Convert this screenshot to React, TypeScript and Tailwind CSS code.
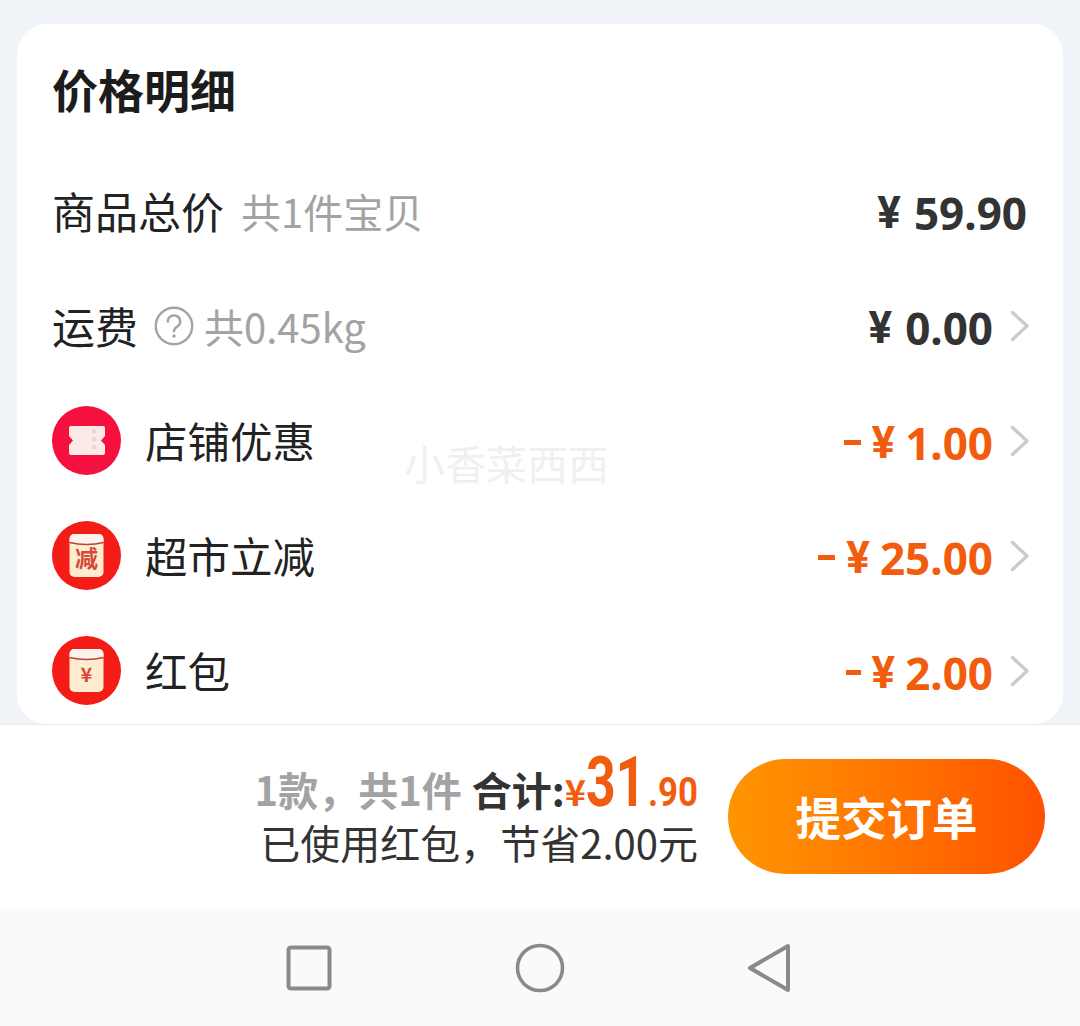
import React from "react";

const CJK = "font-['Noto_Sans_CJK_SC','Noto_Sans',sans-serif]";

function Chevron() {
  return (
    <svg width="20" height="32" viewBox="0 0 20 32" className="shrink-0" fill="none">
      <path d="M2.5 2.5 L17 16 L2.5 29.5" stroke="#cbcbcb" strokeWidth="3.4" strokeLinecap="round" strokeLinejoin="round" />
    </svg>
  );
}

function Coupon() {
  return (
    <svg width="70" height="70" viewBox="0 0 70 70" className="shrink-0">
      <circle cx="34.5" cy="34.5" r="34.5" fill="#f5103f" />
      <path d="M19 20 H51 a2 2 0 0 1 2 2 V30 L49 34.5 L53 39 V47 a2 2 0 0 1 -2 2 H19 a2 2 0 0 1 -2 -2 V39 L21 34.5 L17 30 V22 a2 2 0 0 1 2 -2 Z" fill="#fbe9e6" />
      <path d="M42 23 V46" stroke="#e8cfca" strokeWidth="3" strokeDasharray="4 4" />
    </svg>
  );
}

function Envelope({ glyph, size, glyphY }: { glyph: string; size: number; glyphY: number }) {
  return (
    <svg width="70" height="70" viewBox="0 0 70 70" className="shrink-0">
      <circle cx="34.5" cy="34.5" r="34.5" fill="#f41c17" />
      <rect x="17.5" y="13" width="34" height="43" rx="5" fill="#fdeccf" />
      <path d="M17.5 18 a5 5 0 0 1 5 -5 H46.5 a5 5 0 0 1 5 5 V21.5 Q34.5 25.5 17.5 21.5 Z" fill="#fdf3ee" />
      <path d="M17.5 21.5 Q34.5 25.5 51.5 21.5" fill="none" stroke="#b8433a" strokeWidth="1.6" />
      <text x="34.5" y={glyphY} textAnchor="middle" fontSize={size} fontWeight="700" fontFamily="'Noto Sans CJK SC',sans-serif" fill="#d64a3a">
        {glyph}
      </text>
    </svg>
  );
}

function Amount({ minus, value, accent }: { minus?: string; value: string; accent?: boolean }) {
  return (
    <span className={`flex items-center pt-[4px] font-bold text-[44px] leading-none font-['Noto_Sans','Noto_Sans_CJK_SC',sans-serif] ${accent ? "text-[#f25c0f]" : "text-[#333333]"}`}>
      {minus && <span className={`${minus} h-[5px] bg-[#f25c0f] mr-[11px]`} />}
      <span className={`${accent ? "mr-[10px]" : "mr-[13px]"} font-['Roboto',sans-serif]`}>¥</span>
      <span>{value}</span>
    </span>
  );
}

function DiscountRow({ icon, label, minus, value }: { icon: React.ReactNode; label: string; minus: string; value: string }) {
  return (
    <div className="h-[115px] flex items-center pr-[33px]">
      <span className="ml-0 mr-[23px] flex">{icon}</span>
      <span className="text-[42.5px] leading-none text-[#222222]">{label}</span>
      <span className="ml-auto flex items-center gap-[17px]">
        <Amount minus={minus} value={value} accent />
        <Chevron />
      </span>
    </div>
  );
}

export default function App() {
  return (
    <div className={`w-[1080px] h-[1026px] overflow-hidden flex flex-col bg-[#f0f4f8] ${CJK}`}>
      <main className="h-[724px] pt-[24px] pl-[17px] pr-[17px]">
        <section className="relative h-[700px] bg-white rounded-[30px] pl-[35px]">
          <h1 className="h-[129px] pb-[2px] flex items-center text-[46px] font-bold leading-none text-[#1c1c1c]">价格明细</h1>

          <div className="h-[115px] flex items-center pr-[36px]">
            <span className="text-[43px] leading-none text-[#222222]">商品总价</span>
            <span className="ml-[17px] text-[40px] leading-none text-[#a3a3a3]">共1件宝贝</span>
            <span className="ml-auto">
              <Amount value="59.90" />
            </span>
          </div>

          <div className="h-[115px] flex items-center pr-[33px]">
            <span className="text-[43px] leading-none text-[#222222]">运费</span>
            <svg width="40" height="40" viewBox="0 0 40 40" className="ml-[16px] shrink-0" fill="none">
              <circle cx="20" cy="20" r="18.2" stroke="#a3a3a3" strokeWidth="2.4" />
              <path d="M13.8 15.5 a6.2 6 0 1 1 9.5 5 c-2.2 1.4 -3.3 2.4 -3.3 4.8" stroke="#a3a3a3" strokeWidth="2.4" strokeLinecap="round" />
              <circle cx="20" cy="30" r="1.7" fill="#a3a3a3" />
            </svg>
            <span className="ml-[10px] text-[40px] leading-none text-[#a3a3a3]">共0.45kg</span>
            <span className="ml-auto flex items-center gap-[17px]">
              <Amount value="0.00" />
              <Chevron />
            </span>
          </div>

          <DiscountRow icon={<Coupon />} label="店铺优惠" minus="w-[17px]" value="1.00" />
          <DiscountRow icon={<Envelope glyph="减" size={23} glyphY={46} />} label="超市立减" minus="w-[17px]" value="25.00" />
          <DiscountRow icon={<Envelope glyph="¥" size={20} glyphY={46} />} label="红包" minus="w-[15px]" value="2.00" />

          <span className="absolute left-[387px] top-[414px] text-[41px] leading-[48px] text-[#f0f0f0]">小香菜西西</span>
        </section>
      </main>

      <footer className="h-[184px] bg-white border-t border-[#ececec] flex pt-[34px] pl-[256px]">
        <div className="w-[442px] -mt-[5px] flex flex-col items-end">
          <div className="h-[56px] flex items-baseline whitespace-nowrap font-bold">
            <span className="text-[40px] leading-[40px] text-[#a3a3a3]">1款，共1件</span>
            <span className="ml-[10px] text-[40px] leading-[40px] text-[#333333]">合计:</span>
            <span className="text-[36px] leading-[36px] text-[#f25c0f]">¥</span>
            <span className="w-[62px] inline-block origin-left scale-x-[.74] text-[70px] leading-[56px] text-[#f25c0f] font-['Roboto',sans-serif]">31</span>
            <span className="w-[50px] inline-block origin-left scale-x-[.87] text-[40px] leading-[40px] text-[#f25c0f] font-['Roboto',sans-serif]">.90</span>
          </div>
          <div className="mt-[11px] text-[40px] leading-[42px] text-[#333333] whitespace-nowrap">已使用红包，节省2.00元</div>
        </div>
        <button className="ml-[30px] w-[317px] h-[115px] rounded-full bg-gradient-to-r from-[#ff9500] to-[#ff5000] text-white text-[45.5px] font-bold leading-none">
          提交订单
        </button>
      </footer>

      <nav className="h-[118px] bg-[#fafafa] flex items-center pt-[2px] pl-[286px]">
        <svg width="46" height="46" viewBox="0 0 46 46" fill="none">
          <rect x="2.5" y="2.5" width="41" height="41" rx="2.5" stroke="#8a8a8a" strokeWidth="4" />
        </svg>
        <svg width="50" height="50" viewBox="0 0 50 50" fill="none" className="ml-[183px]">
          <circle cx="25" cy="25" r="22.5" stroke="#8a8a8a" strokeWidth="3.6" />
        </svg>
        <svg width="46" height="50" viewBox="0 0 46 50" fill="none" className="ml-[182px]">
          <path d="M41 3 V47 L3 25 Z" stroke="#8a8a8a" strokeWidth="4" strokeLinejoin="round" />
        </svg>
      </nav>
    </div>
  );
}
